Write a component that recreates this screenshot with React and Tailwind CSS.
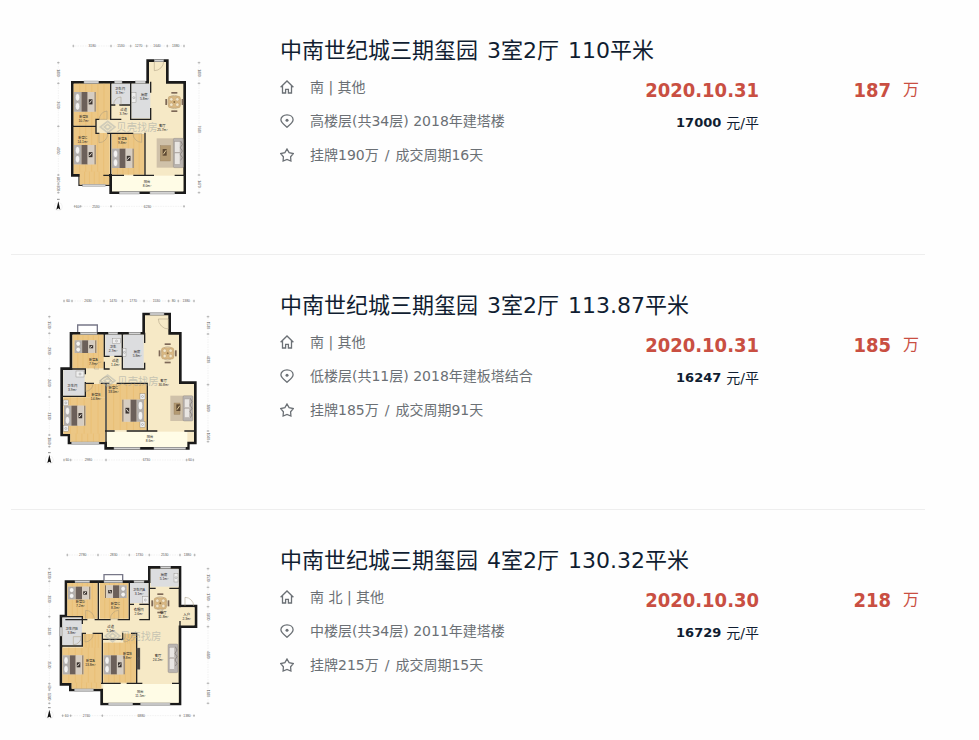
import React from 'react';

const WOOD = '#ecc785';
const TILE = '#dcdddf';
const CREAM = '#f6e9c6';
const BALCONY = '#fffce6';

const houses = [
  {
    id: 1,
    community: '中南世纪城三期玺园',
    layout: '3室2厅',
    area: '110平米',
    direction: '南 | 其他',
    floor: '高楼层(共34层) 2018年建塔楼',
    listed: '挂牌190万',
    period: '成交周期16天',
    date: '2020.10.31',
    unitPrice: '17000',
    total: '187',
    plan: {
      outer: 'M97 157H323V92H382V157H434V488H212V436H97Z',
      bay: 'M117 436V466H212',
      bayFill: [118, 436, 92, 28, WOOD],
      rooms: [
        [101, 161, 109, 126, WOOD],
        [215, 161, 55, 62, TILE],
        [274, 161, 57, 104, TILE],
        [101, 291, 108, 141, WOOD],
        [119, 425, 88, 38, WOOD],
        [216, 312, 98, 122, WOOD],
        [216, 437, 214, 47, BALCONY],
      ],
      hall: [168, 269, 50, 40],
      walls: 'M212 157V268M212 225H224M240 225H271M272 157V268H332M332 157V186M332 236V268M213 268H242M97 289H168V268H176M168 289V310H176M203 310H278M212 310V436M192 436H210M315 310V436M207 436H250M282 436H340M406 436H434',
      windows: [[132, 153, 44, 7], [224, 153, 22, 7], [286, 153, 30, 7], [238, 485, 60, 7], [330, 485, 74, 7], [343, 89, 28, 6], [128, 463, 68, 6]],
      doors: ['M343 94V122A28 28 0 0 0 371 94', 'M201 268H178A25 25 0 0 1 201 243Z', 'M177 311V338A26 26 0 0 0 203 311', 'M279 311H305V337A26 26 0 0 1 279 311', 'M243 225V201A22 22 0 0 0 221 223'],
      beds: [[102, 186, 66, 59, false], [102, 345, 66, 58, false], [216, 356, 66, 58, false]],
      tables: [[403, 216]],
      sofas: [[350, 325, 80, 88]],
      labels: [[131, 264, '卧室B', '10.7m²'], [240, 181, '卫生间', '3.7m²'], [251, 243, '过道', '3.7m²'], [313, 197, '厨房', '5.8m²'], [128, 327, '卧室C', '14.1m²'], [247, 330, '卧室A', '9.8m²'], [367, 290, '客厅', '25.7m²'], [321, 460, '阳台', '8.0m²']],
      extras: [[275, 188, 13, 30]],
      mark: [229, 302, '贝壳找房'],
      logo: [203, 291],
      top: [48, [100, 213, 272, 320, 382, 432], ['3180', '1530', '1270', '1640', '1380']],
      bottom: [529, [104, 122, 213, 432], ['60', '2530', '6230']],
      left: [55, [98, 160, 289, 435, 462, 488], ['1800', '3630', '4050', '840', '800']],
      right: [477, [98, 160, 435, 488], ['1800', '7680', '1470']],
      compass: [55, 530],
    },
  },
  {
    id: 2,
    community: '中南世纪城三期玺园',
    layout: '3室2厅',
    area: '113.87平米',
    direction: '南 | 其他',
    floor: '低楼层(共11层) 2018年建板塔结合',
    listed: '挂牌185万',
    period: '成交周期91天',
    date: '2020.10.31',
    unitPrice: '16247',
    total: '185',
    plan: {
      outer: 'M93 145H311V87H389V145H421V293H466V474H445V490H197V474H87V450H65V251H93Z',
      bay: 'M113 142V120H172V142',
      bayFill: [116, 122, 54, 20, '#ffffff'],
      rooms: [
        [98, 149, 93, 101, WOOD],
        [196, 149, 49, 64, TILE],
        [250, 149, 61, 102, TILE],
        [70, 255, 64, 77, TILE],
        [137, 297, 58, 40, WOOD],
        [70, 337, 125, 110, WOOD],
        [91, 446, 104, 25, WOOD],
        [201, 297, 119, 138, WOOD],
        [201, 440, 241, 46, BALCONY],
      ],
      hall: [138, 254, 80, 40],
      walls: 'M193 145V214H207M225 214H247V145M247 214V252H314V235M193 232V252H207M93 252H136V266M136 293V334H65M314 145V172M136 295H160M184 295H206M232 295H322V438M198 295V474M197 438H222M262 438H350M435 438H466',
      windows: [[121, 142, 50, 6], [205, 142, 28, 6], [267, 142, 34, 6], [95, 471, 82, 6], [222, 487, 78, 6], [342, 487, 95, 6], [330, 84, 42, 6]],
      doors: ['M385 102H355A31 31 0 0 0 385 132Z', 'M177 252H163A21 21 0 0 1 184 231', 'M136 296V319A23 23 0 0 0 159 296', 'M207 296V319A23 23 0 0 0 230 296', 'M178 296A25 25 0 0 1 203 275L218 291'],
      beds: [[104, 166, 66, 38, false], [72, 362, 65, 60, false], [246, 344, 66, 66, true]],
      tables: [[383, 205]],
      sofas: [[391, 332, 68, 76]],
      labels: [[160, 229, '卧室A', '7.9m²'], [219, 188, '卫生', '2.7m²'], [226, 230, '过道', '1.4m²'], [291, 204, '厨房', '5.8m²'], [97, 305, '卫生间', '3.9m²'], [168, 334, '卧室B', '14.8m²'], [220, 311, '卧室C', '13.0m²'], [371, 291, '客厅', '30.8m²'], [330, 459, '阳台', '8.6m²']],
      extras: [[248, 190, 10, 24], [217, 160, 25, 16], [108, 258, 24, 18], [70, 345, 15, 17], [70, 422, 15, 17], [300, 326, 15, 17], [300, 410, 15, 17]],
      mark: [232, 299, '贝壳找房'],
      logo: [203, 287],
      top: [48, [72, 96, 192, 247, 312, 386, 415, 462], ['60', '2630', '1470', '1770', '1530', '80', '1380']],
      bottom: [525, [72, 92, 198, 440, 460], ['60', '2980', '6730', '60']],
      left: [28, [95, 145, 251, 336, 450, 485], ['1530', '2930', '2430', '3130', '1040']],
      right: [504, [95, 147, 299, 438, 470], ['1530', '4230', '3880', '1040']],
      compass: [28, 525],
    },
  },
  {
    id: 3,
    community: '中南世纪城三期玺园',
    layout: '4室2厅',
    area: '130.32平米',
    direction: '南 北 | 其他',
    floor: '中楼层(共34层) 2011年建塔楼',
    listed: '挂牌215万',
    period: '成交周期15天',
    date: '2020.10.30',
    unitPrice: '16729',
    total: '218',
    plan: {
      outer: 'M78 125H328V82H420V198H468V260H420V492H185V450H91V433H63V228H78Z',
      bay: 'M192 125V104H248V125',
      bayFill: [194, 106, 52, 18, '#ffffff'],
      rooms: [
        [82, 129, 90, 107, WOOD],
        [180, 129, 85, 107, WOOD],
        [270, 129, 55, 60, TILE],
        [332, 87, 84, 53, TILE],
        [67, 232, 59, 83, TILE],
        [129, 282, 55, 42, WOOD],
        [67, 323, 117, 106, WOOD],
        [95, 428, 89, 18, WOOD],
        [190, 308, 99, 120, WOOD],
        [250, 281, 39, 30, WOOD],
        [190, 432, 226, 56, BALCONY],
        [414, 202, 49, 54, CREAM],
      ],
      hall: [130, 240, 60, 38],
      walls: 'M175 125V239M78 239H140M166 239H210M235 239H268V125M268 193H280M300 193H328V125M328 193V239H300M328 82V145H345M390 145H420M63 230H127V250M127 280V318H63M127 280H136M160 280H187V430M189 298H248V280M290 280V430H262M275 280H290M185 430H240M264 430H305M398 430H420M420 143V200M420 245V262',
      windows: [[105, 122, 44, 6], [192, 122, 56, 6], [282, 122, 30, 6], [362, 79, 30, 6], [60, 262, 6, 26], [104, 447, 56, 6], [206, 489, 72, 6], [302, 489, 88, 6]],
      doors: ['M137 237V211A26 26 0 0 1 163 237', 'M236 237H211A26 26 0 0 1 236 211Z', 'M435 198V172A26 26 0 0 1 461 198', 'M135 281V306A25 25 0 0 0 160 281', 'M252 281V306A25 25 0 0 0 277 281', 'M100 314V290H124A24 24 0 0 1 100 314'],
      beds: [[84, 140, 68, 38, false], [194, 136, 66, 38, true], [68, 346, 63, 57, false], [191, 346, 64, 57, false]],
      tables: [[361, 190]],
      sofas: [[386, 312, 28, 86]],
      labels: [[121, 190, '卧室D', '7.2m²'], [226, 196, '卧室C', '8.3m²'], [297, 154, '卫生间A', '3.1m²'], [296, 213, '衣帽间', '2.6m²'], [372, 109, '厨房', '5.1m²'], [370, 221, '餐厅', '11.8m²'], [440, 227, '入户', '2.3m²'], [95, 270, '卫生间B', '3.8m²'], [212, 264, '过道', '5.1m²'], [151, 366, '卧室A', '13.8m²'], [262, 344, '卧室B', '9.8m²'], [354, 352, '客厅', '24.2m²'], [301, 459, '阳台', '11.5m²']],
      extras: [[402, 100, 12, 26], [307, 170, 18, 20], [291, 324, 9, 64]],
      mark: [240, 300, '贝壳找房'],
      logo: [218, 288],
      top: [45, [82, 174, 268, 328, 420, 464], ['2780', '2830', '1730', '2530', '1380']],
      bottom: [527, [68, 92, 187, 420, 462], ['60', '2740', '6880', '1380']],
      left: [28, [86, 124, 230, 317, 431, 450, 490], ['1230', '3030', '2430', '3530', '60', '1380']],
      right: [504, [86, 142, 200, 260, 430, 490], ['1530', '1780', '1830', '4880', '1380']],
      compass: [28, 525],
    },
  },
];

const Bed = ({ x, y, w, h, flip }) => (
  <g transform={flip ? `translate(${x + w} ${y}) scale(-1 1)` : `translate(${x} ${y})`}>
    <rect width={w} height={h} fill="#e2d6c2" />
    <rect width={w * 0.33} height={h} fill="#b3afac" />
    <ellipse cx={w * 0.16} cy={h * 0.27} rx={w * 0.1} ry={h * 0.19} fill="#f4f3f2" stroke="#8a847f" />
    <ellipse cx={w * 0.16} cy={h * 0.73} rx={w * 0.1} ry={h * 0.19} fill="#f4f3f2" stroke="#8a847f" />
    <rect x={w * 0.34} width={w * 0.28} height={h} fill="#6c605a" />
    <rect x={w * 0.62} width={w * 0.28} height={h} fill="#d6cdc2" />
    <rect x={w * 0.67} y={h * 0.37} width={w * 0.17} height={h * 0.26} fill="#3a322e" />
    <path d={`M${w * 0.7} ${h * 0.57}L${w * 0.8} ${h * 0.43}`} stroke="#e5dfd8" strokeWidth="3" />
    <path d={`M${w * 0.96} 0V${h}`} stroke="#7d6b58" strokeWidth="3" />
  </g>
);

const DiningTable = ({ x, y }) => (
  <g transform={`translate(${x} ${y})`}>
    <circle r="20" fill="none" stroke="#b9a98c" strokeWidth="2" />
    <g fill="#7d6857">
      <rect x="-9" y="-30" width="18" height="5" />
      <rect x="-9" y="25" width="18" height="5" />
      <rect x="-27" y="-9" width="5" height="18" />
      <rect x="22" y="-9" width="5" height="18" />
    </g>
    <rect x="-18" y="-17" width="36" height="34" rx="5" fill="#d9b883" stroke="#a98a5c" />
    <g fill="#f1e5ca" stroke="#b08f5d">
      <circle cx="-9" cy="-8" r="5" />
      <circle cx="9" cy="-8" r="5" />
      <circle cx="-9" cy="8" r="5" />
      <circle cx="9" cy="8" r="5" />
    </g>
    <circle r="3" fill="#8c7046" />
  </g>
);

const Sofa = ({ x, y, w, h }) => (
  <g transform={`translate(${x} ${y})`}>
    {w > 40 && (
      <>
        <rect y="0" width={w - 26} height={h} fill="#cfc1a9" />
        <rect x="11" y="22" width={w - 50} height={h - 42} fill="#b39a72" stroke="#8d7755" />
        <rect x="18" y={h / 2 - 12} width="12" height="20" fill="#5e4a34" />
        <path d={`M20 ${h / 2 + 4}l8 -12`} stroke="#e4cf9c" strokeWidth="3" />
      </>
    )}
    <rect x={w - 30} width="30" height={h} rx="4" fill="#b9b4b0" stroke="#81776f" />
    <rect x={w - 26} y="10" width="16" height={h / 2 - 12} fill="#e8e5e2" stroke="#9a918b" />
    <rect x={w - 26} y={h / 2} width="16" height={h / 2 - 10} fill="#e8e5e2" stroke="#9a918b" />
    <path d={`M${w - 8} 8l5 10-6 10 6 10-6 10 6 10-5 8`} fill="none" stroke="#79716b" strokeWidth="2" />
  </g>
);

// dimension line with ticks, horizontal or vertical
const Ruler = ({ at, stops, texts, vertical }) => (
  <g transform={vertical ? `translate(${at} 0) rotate(90)` : `translate(0 ${at})`}>
    {stops.map((s) => (
      <path key={s} d={`M${s} -4V4M${s - 3} 0H${s + 3}`} stroke="#888888" strokeWidth="1.5" />
    ))}
    {texts.map((t, i) => {
      const mid = (stops[i] + stops[i + 1]) / 2;
      const half = t.length * 3;
      return (
        <g key={i}>
          <path
            d={`M${stops[i]} 0H${mid - half}M${mid + half} 0H${stops[i + 1]}`}
            stroke="#c4c4c4"
            strokeDasharray="2 3"
          />
          <text x={mid} y="4" textAnchor="middle" fontSize="10" fill="#555555">{t}</text>
        </g>
      );
    })}
  </g>
);

const FloorPlan = ({ plan, title }) => {
  const [bx, by, bw, bh, bfill] = plan.bayFill;
  const [hx, hy, hw, hh] = plan.hall;
  const [mx, my, mark] = plan.mark;
  const [lx, ly] = plan.logo;
  const [cx, cy] = plan.compass;
  return (
    <svg
      viewBox="0 0 540 570"
      className="w-[180px] h-[190px] font-['Liberation_Sans','Noto_Sans_CJK_SC',sans-serif]"
      role="img"
      aria-label={title}
    >
      <rect x={bx} y={by} width={bw} height={bh} fill={bfill} />
      <path d={plan.bay} fill="none" stroke={bfill === WOOD ? '#2b2927' : '#777788'} strokeWidth="4" />
      <path d={plan.outer} fill={CREAM} stroke="#1a1a1a" strokeWidth="8" />
      {plan.rooms.map(([x, y, w, h, fill], i) => (
        <g key={i}>
          <rect x={x} y={y} width={w} height={h} fill={fill} />
          {fill === WOOD &&
            [1, 2, 3, 4, 5].map((n) => (
              <path key={n} d={`M${x + (w * n) / 6} ${y}V${y + h}`} stroke="#e6b968" strokeWidth="1.5" />
            ))}
        </g>
      ))}
      <rect x={hx} y={hy} width={hw} height={hh} fill={CREAM} />
      <path d={plan.walls} fill="none" stroke="#222222" strokeWidth="4" strokeLinecap="square" />
      {plan.windows.map(([x, y, w, h], i) => (
        <rect key={i} x={x} y={y} width={w} height={h} fill="#d4d4d4" stroke="#999999" strokeWidth="1.5" />
      ))}
      {plan.doors.map((d) => (
        <path key={d} d={d} fill="none" stroke="#a7997c" strokeWidth="1.5" />
      ))}
      {plan.extras.map(([x, y, w, h], i) => (
        <g key={i}>
          <rect x={x} y={y} width={w} height={h} fill={h > 50 ? '#4a4541' : '#eeeeee'} stroke="#77736d" />
          <circle cx={x + w / 2} cy={y + h / 2} r="3" fill="none" stroke="#666666" />
        </g>
      ))}
      {plan.beds.map(([x, y, w, h, flip], i) => (
        <Bed key={i} x={x} y={y} w={w} h={h} flip={flip} />
      ))}
      {plan.tables.map(([x, y], i) => (
        <DiningTable key={i} x={x} y={y} />
      ))}
      {plan.sofas.map(([x, y, w, h], i) => (
        <Sofa key={i} x={x} y={y} w={w} h={h} />
      ))}
      <g opacity="0.45">
        <path
          d={`M${lx - 22} ${ly}l22 -17 22 17 -22 17zM${lx - 10} ${ly}l10 -8 10 8 -10 8z`}
          fill="none"
          stroke="#a3aaab"
          strokeWidth="5"
        />
        <text x={mx} y={my} fontSize="31" fill="#8d979b">{mark}</text>
      </g>
      {plan.labels.map(([x, y, name, size], i) => (
        <g key={i} textAnchor="middle" fill="#222222" fontSize="10">
          <text x={x} y={y}>{name}</text>
          <text x={x} y={y + 12}>{size}</text>
        </g>
      ))}
      <Ruler at={plan.top[0]} stops={plan.top[1]} texts={plan.top[2]} />
      <Ruler at={plan.bottom[0]} stops={plan.bottom[1]} texts={plan.bottom[2]} />
      <Ruler at={plan.left[0]} stops={plan.left[1]} texts={plan.left[2]} vertical />
      <Ruler at={plan.right[0]} stops={plan.right[1]} texts={plan.right[2]} vertical />
      <circle cx={cx} cy={cy} r="12" fill="none" stroke="#dddddd" />
      <path d={`M${cx} ${cy - 16}l6 25-6-4-6 4z`} fill="#111111" />
      <path d={`M${cx - 4} ${cy - 22}h8`} fill="none" stroke="#555555" strokeWidth="2" />
    </svg>
  );
};

const iconProps = {
  viewBox: '0 0 14 14',
  className: 'w-3.5 h-3.5 shrink-0',
  fill: 'none',
  stroke: 'currentColor',
  strokeWidth: 1.3,
  'aria-hidden': true,
};

const HomeIcon = () => (
  <svg {...iconProps}>
    <path d="M0.6 7.2L7 1L13.4 7.2M2.5 5.8V13H5.6V9.4H8.4V13H11.5V5.8" />
  </svg>
);

const PinIcon = () => (
  <svg {...iconProps}>
    <path d="M7 13.3C4.2 10.8 0.9 8.5 0.9 5.8C0.9 2.9 3.6 0.8 7 0.8C10.4 0.8 13.1 2.9 13.1 5.8C13.1 8.5 9.8 10.8 7 13.3Z" />
    <circle cx="7" cy="6.2" r="1.5" fill="currentColor" stroke="none" />
  </svg>
);

const StarIcon = () => (
  <svg {...iconProps}>
    <path d="M7 1L9.1 4.6L13.3 5.6L10.6 8.8L10.9 13L7 11.5L3.1 13L3.4 8.8L0.7 5.6L4.9 4.6Z" />
  </svg>
);

const HouseItem = ({ house }) => {
  const title = `${house.community} ${house.layout} ${house.area}`;
  return (
    <li className="flex items-start pl-[29px] pr-[6px] pt-[30px] pb-[34px] border-b border-[#eeeeee] last:border-b-0 last:pb-0">
      <a href="#" className="shrink-0">
        <FloorPlan plan={house.plan} title={title} />
      </a>
      <div className="flex-1 pl-[60px] pt-[5px]">
        <h2 className="text-[22px] leading-8 text-[#101d31]">
          <a href="#" className="flex gap-[9px]">
            <span>{house.community}</span>
            <span>{house.layout}</span>
            <span>{house.area}</span>
          </a>
        </h2>
        <div className="flex items-start pt-[3px]">
          <ul className="flex-1 text-sm text-[#6b7075]">
            <li className="flex items-center h-[34px] gap-4"><HomeIcon />{house.direction}</li>
            <li className="flex items-center h-[34px] gap-4"><PinIcon />{house.floor}</li>
            <li className="flex items-center h-[34px] gap-4">
              <StarIcon />
              <span className="flex gap-1.5">
                <span>{house.listed}</span>
                <span>/</span>
                <span>{house.period}</span>
              </span>
            </li>
          </ul>
          <div className="text-right">
            <div className="leading-10 text-xl font-bold text-[#c94f42] font-['DejaVu_Sans_Condensed','DejaVu_Sans',sans-serif]">
              {house.date}
            </div>
            <div className="flex items-center justify-end gap-[5px] h-[26px] text-sm text-[#101d31]">
              <span className="text-[13px] font-bold">{house.unitPrice}</span>
              <span>元/平</span>
            </div>
          </div>
          <div className="flex items-center justify-end gap-3 w-[160px] h-10 text-[#c94f42]">
            <span className="text-xl font-bold font-['DejaVu_Sans_Condensed','DejaVu_Sans',sans-serif]">{house.total}</span>
            <span className="text-base">万</span>
          </div>
        </div>
      </div>
    </li>
  );
};

const App = () => {
  return (
    <div className="bg-[#fefefe] min-h-screen font-['DejaVu_Sans','Noto_Sans_CJK_SC',sans-serif]">
      <ul className="ml-[11px] mr-[54px]">
        {houses.map((house) => (
          <HouseItem key={house.id} house={house} />
        ))}
      </ul>
    </div>
  );
};

export default App;
